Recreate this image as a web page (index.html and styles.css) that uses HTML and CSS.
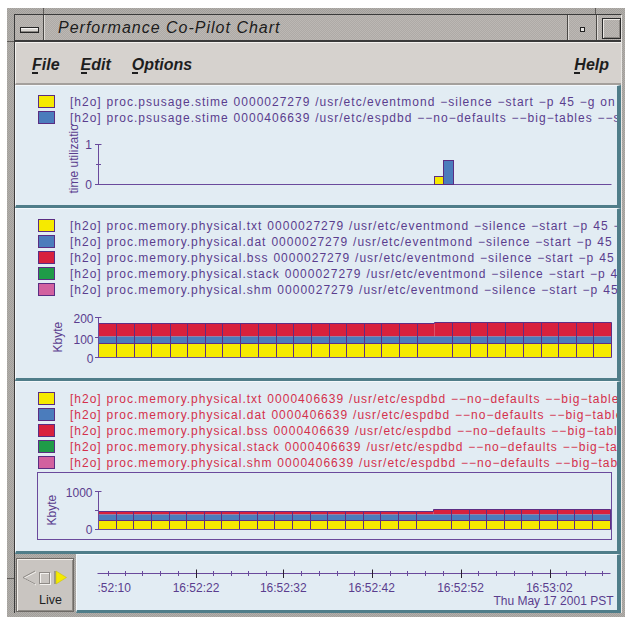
FILE: index.html
```html
<!DOCTYPE html>
<html lang="en">
<head>
<meta charset="utf-8">
<title>Performance Co-Pilot Chart</title>
<link rel="stylesheet" href="styles.css">
</head>
<body>
<div class="frame">
  <div class="window">
    <header class="titlebar">
      <div class="tb-button tb-menu"><span class="tb-menu-bar"></span></div>
      <div class="tb-title">Performance Co-Pilot Chart</div>
      <div class="tb-button tb-min"><span class="tb-min-dot"></span></div>
      <div class="tb-button tb-max"><span class="tb-max-box"></span></div>
    </header>

    <nav class="menubar">
      <span class="menu-item"><span class="mn">F</span>ile</span>
      <span class="menu-item"><span class="mn">E</span>dit</span>
      <span class="menu-item"><span class="mn">O</span>ptions</span>
      <span class="menu-item help"><span class="mn">H</span>elp</span>
    </nav>

    <main class="charts">
      <!-- system time per process -->
      <section class="panel">
        <ul class="legend">
          <li class="legend-row"><span class="swatch c-yellow"></span><span class="legend-text">[h2o] proc.psusage.stime 0000027279 /usr/etc/eventmond −silence −start −p 45 −g on</span></li>
          <li class="legend-row"><span class="swatch c-blue"></span><span class="legend-text">[h2o] proc.psusage.stime 0000406639 /usr/etc/espdbd −−no−defaults −−big−tables −−skip−locking</span></li>
        </ul>
        <svg class="plot" width="601" height="80" viewBox="16 125 601 80">
          <text class="ylabel" transform="translate(78 193.5) rotate(-90)">time utilization</text>
          <text class="tick-label" x="92" y="149.3">1</text>
          <text class="tick-label" x="92" y="188.6">0</text>
          <path class="axis" d="M98.5 144.5V184.5M95 144.5H101.5M96 164.5H101M95 184.5H611.5"/>
          <rect class="bar c-yellow" x="434.5" y="176.5" width="9" height="8"/>
          <rect class="bar c-blue" x="443.5" y="160.5" width="10" height="24"/>
        </svg>
      </section>

      <!-- memory of eventmond -->
      <section class="panel">
        <ul class="legend">
          <li class="legend-row"><span class="swatch c-yellow"></span><span class="legend-text">[h2o] proc.memory.physical.txt 0000027279 /usr/etc/eventmond −silence −start −p 45 −g on</span></li>
          <li class="legend-row"><span class="swatch c-blue"></span><span class="legend-text">[h2o] proc.memory.physical.dat 0000027279 /usr/etc/eventmond −silence −start −p 45 −g on</span></li>
          <li class="legend-row"><span class="swatch c-red"></span><span class="legend-text">[h2o] proc.memory.physical.bss 0000027279 /usr/etc/eventmond −silence −start −p 45 −g on</span></li>
          <li class="legend-row"><span class="swatch c-green"></span><span class="legend-text">[h2o] proc.memory.physical.stack 0000027279 /usr/etc/eventmond −silence −start −p 45 −g on</span></li>
          <li class="legend-row"><span class="swatch c-pink"></span><span class="legend-text">[h2o] proc.memory.physical.shm 0000027279 /usr/etc/eventmond −silence −start −p 45 −g on</span></li>
        </ul>
        <svg class="plot" width="601" height="81" viewBox="16 297 601 81">
          <text class="ylabel" transform="translate(62 352.5) rotate(-90)">Kbyte</text>
          <text class="tick-label" x="93.5" y="322.6">200</text>
          <text class="tick-label" x="93.5" y="343.6">100</text>
          <text class="tick-label" x="93.5" y="362.6">0</text>
          <rect class="band c-red" x="98.5" y="323.5" width="336" height="13"/>
          <rect class="band c-red" x="434.5" y="322.5" width="177" height="14"/>
          <rect class="band c-blue" x="98.5" y="336.5" width="513" height="7"/>
          <rect class="band c-yellow" x="98.5" y="343.5" width="513" height="14"/>
          <path class="bar-line" d="M98.5 323.5H434.5V322.5H611.5V357.5M98.5 343.5H611.5
            M116.5 323.5V357.5M134.5 323.5V357.5M151.5 323.5V357.5M170.5 323.5V357.5M187.5 323.5V357.5
            M205.5 323.5V357.5M222.5 323.5V357.5M240.5 323.5V357.5M258.5 323.5V357.5M276.5 323.5V357.5
            M293.5 323.5V357.5M311.5 323.5V357.5M329.5 323.5V357.5M346.5 323.5V357.5M364.5 323.5V357.5
            M381.5 323.5V357.5M399.5 323.5V357.5M417.5 323.5V357.5
            M452.5 322.5V357.5M470.5 322.5V357.5M487.5 322.5V357.5M505.5 322.5V357.5M523.5 322.5V357.5
            M541.5 322.5V357.5M558.5 322.5V357.5M576.5 322.5V357.5M593.5 322.5V357.5"/>
          <path class="axis" d="M98.5 317V357.5M95 317.5H101.5M95 337.5H98.5M95 357.5H611.5"/>
        </svg>
      </section>

      <!-- memory of espdbd -->
      <section class="panel panel-alt">
        <ul class="legend">
          <li class="legend-row"><span class="swatch c-yellow"></span><span class="legend-text">[h2o] proc.memory.physical.txt 0000406639 /usr/etc/espdbd −−no−defaults −−big−tables −−skip−locking</span></li>
          <li class="legend-row"><span class="swatch c-blue"></span><span class="legend-text">[h2o] proc.memory.physical.dat 0000406639 /usr/etc/espdbd −−no−defaults −−big−tables −−skip−locking</span></li>
          <li class="legend-row"><span class="swatch c-red"></span><span class="legend-text">[h2o] proc.memory.physical.bss 0000406639 /usr/etc/espdbd −−no−defaults −−big−tables −−skip−locking</span></li>
          <li class="legend-row"><span class="swatch c-green"></span><span class="legend-text">[h2o] proc.memory.physical.stack 0000406639 /usr/etc/espdbd −−no−defaults −−big−tables −−skip−locking</span></li>
          <li class="legend-row"><span class="swatch c-pink"></span><span class="legend-text">[h2o] proc.memory.physical.shm 0000406639 /usr/etc/espdbd −−no−defaults −−big−tables −−skip−locking</span></li>
        </ul>
        <svg class="plot" width="601" height="81" viewBox="16 470 601 81">
          <rect class="plot-frame" x="37.5" y="472.5" width="574" height="67"/>
          <text class="ylabel" transform="translate(55.5 525.5) rotate(-90)">Kbyte</text>
          <text class="tick-label" x="92.5" y="496.6">1000</text>
          <text class="tick-label" x="92.5" y="534.3">0</text>
          <rect class="band c-red" x="98.5" y="511.5" width="335" height="3"/>
          <rect class="band c-red" x="433.5" y="509.5" width="177" height="5"/>
          <rect class="band c-blue" x="98.5" y="514.5" width="512" height="6"/>
          <rect class="band c-yellow" x="98.5" y="520.5" width="512" height="9"/>
          <path class="bar-line" d="M98.5 511.5H433.5V509.5H610.5V529.5M98.5 520.5H610.5
            M116.5 511.5V529.5M133.5 511.5V529.5M151.5 511.5V529.5M169.5 511.5V529.5M186.5 511.5V529.5
            M204.5 511.5V529.5M221.5 511.5V529.5M239.5 511.5V529.5M257.5 511.5V529.5M274.5 511.5V529.5
            M292.5 511.5V529.5M310.5 511.5V529.5M327.5 511.5V529.5M345.5 511.5V529.5M363.5 511.5V529.5
            M380.5 511.5V529.5M398.5 511.5V529.5M416.5 511.5V529.5
            M451.5 509.5V529.5M469.5 509.5V529.5M486.5 509.5V529.5M504.5 509.5V529.5M521.5 509.5V529.5
            M539.5 509.5V529.5M557.5 509.5V529.5M574.5 509.5V529.5M592.5 509.5V529.5"/>
          <path class="axis" d="M98.5 491.5V529.5M95 491.5H101.5M95 510.5H98.5M95 529.5H610.5"/>
        </svg>
      </section>

      <!-- time controls -->
      <div class="timebar">
        <div class="live">
          <svg class="live-icons" width="56" height="28" viewBox="17 559 56 28">
            <polyline class="emboss-hi" points="36,572 24,578 36,585"/>
            <polyline class="emboss-lo" points="35,571 23,577.5 35,584"/>
            <rect class="emboss-hi" x="40.5" y="573.5" width="10" height="11"/>
            <rect class="emboss-lo" x="39.5" y="572.5" width="10" height="11"/>
            <rect class="play-edge" x="54" y="571" width="2" height="13"/>
            <polygon class="play" points="56,571 66.5,577.5 56,584"/>
          </svg>
          <span class="live-label">Live</span>
        </div>
        <div class="time-panel">
          <svg class="time-axis" width="540" height="55" viewBox="77 555 540 55">
            <path class="tick-minor" d="M97.5 573.5H610.5
              M108.5 571V576M125.5 571V576M142.5 571V576M160.5 571V576M178.5 571V576
              M213.5 571V576M231.5 571V576M248.5 571V576M266.5 571V576
              M301.5 571V576M319.5 571V576M337.5 571V576M354.5 571V576
              M390.5 571V576M407.5 571V576M425.5 571V576M443.5 571V576
              M478.5 571V576M496.5 571V576M514.5 571V576M532.5 571V576
              M566.5 571V576M585.5 571V576M602.5 571V576"/>
            <path class="tick-major" d="M196.5 569.5V578M283.5 569.5V578M372.5 569.5V578M461.5 569.5V578M550.5 569.5V578"/>
            <text class="time-label start" x="97.5" y="591.6">:52:10</text>
            <text class="time-label" x="196" y="591.6">16:52:22</text>
            <text class="time-label" x="283.3" y="591.6">16:52:32</text>
            <text class="time-label" x="371.5" y="591.6">16:52:42</text>
            <text class="time-label" x="460.5" y="591.6">16:52:52</text>
            <text class="time-label" x="549.3" y="591.6">16:53:02</text>
            <text class="date-label" x="613.5" y="605.3">Thu May 17 2001 PST</text>
          </svg>
        </div>
      </div>
    </main>
  </div>
</div>
</body>
</html>
```

FILE: styles.css
```css
* {
  box-sizing: border-box;
}

html,
body {
  margin: 0;
  padding: 0;
}

body {
  width: 625px;
  height: 617px;
  overflow: hidden;
  background: #ffffff;
  font-family: "Liberation Sans", Arial, sans-serif;
}

/* ---- window manager frame ---- */
.frame {
  position: relative;
  margin: 8px 0 0 7px;
  width: 618px;
  height: 609px;
  padding: 6px 0 0 7px;
  background-color: #a9a6a2;
  background-image: repeating-conic-gradient(#a29f9b 0 25%, #b2afab 0 50%);
  background-size: 2px 2px;
}

/* resize-corner notches cut into the frame border */
.frame::before {
  content: "";
  position: absolute;
  left: 36px;
  top: 0;
  width: 1px;
  height: 6px;
  background: #5e5b58;
  box-shadow: 552px 0 0 #5e5b58;
}

.frame::after {
  content: "";
  position: absolute;
  left: 0;
  top: 33px;
  width: 7px;
  height: 1px;
  background: #5e5b58;
  box-shadow: 0 537px 0 #5e5b58;
}

.window {
  width: 608px;
  border: 1px solid #3a3a3a;
  border-bottom: none;
  border-right-color: #e9e7e4;
}

.titlebar {
  display: flex;
  height: 27px;
  border-bottom: 2px solid #3a3a3a;
  background-color: #b5b1ad;
  background-image: repeating-conic-gradient(#aeaaa6 0 25%, #bcb8b4 0 50%);
  background-size: 2px 2px;
}

.tb-button {
  flex: none;
  display: flex;
  justify-content: center;
  align-items: flex-start;
}

.tb-menu {
  width: 29px;
  border-right: 1px solid #4a4845;
}

.tb-menu-bar {
  width: 19px;
  height: 6px;
  margin-top: 12px;
  border: 1px solid #262626;
  background: #d9d6d2;
  box-shadow: inset 0 1px 0 #f6f4f2, inset 0 -1px 0 #8b8884;
}

.tb-title {
  flex: 1;
  border-left: 1px solid #dedbd7;
  padding: 1px 0 0 13px;
  font-size: 16px;
  font-style: italic;
  letter-spacing: 1px;
  line-height: 24px;
  color: #1c1c1c;
  white-space: nowrap;
}

.tb-min {
  width: 29px;
  border-left: 1px solid #4a4845;
  box-shadow: inset 1px 0 0 #dedbd7;
}

.tb-min-dot {
  width: 5px;
  height: 5px;
  margin-top: 12px;
  border: 1px solid #222;
  background: #e8e6e3;
}

.tb-max {
  width: 25px;
  border-left: 1px solid #4a4845;
  box-shadow: inset 1px 0 0 #dedbd7;
  justify-content: flex-end;
}

.tb-max-box {
  width: 19px;
  height: 21px;
  margin-top: 3px;
  border: 1px solid #2a2a2a;
  box-shadow: inset 1px 1px 0 #ebe8e4, inset -1px -1px 0 #8a8682;
}

/* ---- menu bar ---- */
.menubar {
  display: flex;
  gap: 21px;
  height: 43px;
  padding: 13px 12px 0 16px;
  background: #d6d2ce;
  border-top: 1px solid #f3f1ee;
  border-left: 1px solid #f3f1ee;
  border-bottom: 2px solid #a4a09c;
}

.menu-item {
  font-size: 16px;
  font-style: italic;
  font-weight: bold;
  line-height: 18px;
  color: #1e1e1e;
}

.menu-item.help {
  margin-left: auto;
}

.mn {
  position: relative;
}

.mn::after {
  content: "";
  position: absolute;
  left: 0;
  bottom: -1px;
  width: 6px;
  height: 2px;
  background: #1e1e1e;
}

/* ---- chart strips ---- */
.charts {
  display: flex;
  flex-direction: column;
}

.panel {
  overflow: hidden;
  background: #e2ecf3;
  border-top: 1px solid #f4f8fb;
  border-left: 1px solid #f4f8fb;
  border-right: 4px solid #4f7d89;
  border-bottom: 3px solid #4f7d89;
}

.legend {
  list-style: none;
  margin: 0;
  padding: 8px 0 0 22px;
}

.panel:first-child .legend {
  padding-top: 7px;
}

.legend-row {
  display: flex;
  height: 16px;
  white-space: nowrap;
}

.swatch {
  flex: none;
  width: 17px;
  height: 13px;
  margin-top: 2px;
  border: 1px solid #5a2d82;
}

.legend-text {
  margin-left: 15px;
  padding-top: 3px;
  font-size: 12px;
  line-height: 13px;
  letter-spacing: 1px;
  word-spacing: 0.6px;
  color: #5a3d8e;
}

.panel-alt .legend-text {
  color: #d4304c;
}

.plot,
.time-axis,
.live-icons {
  display: block;
}

.c-yellow { background: #f6ea00; fill: #f6ea00; }
.c-blue   { background: #4b7cbc; fill: #4b7cbc; }
.c-red    { background: #d8213d; fill: #d8213d; }
.c-green  { background: #1f9b48; fill: #1f9b48; }
.c-pink   { background: #d2619f; fill: #d2619f; }

.plot text,
.time-axis text {
  font-family: "Liberation Sans", Arial, sans-serif;
  font-size: 12px;
  fill: #5a3d8e;
}

.tick-label {
  text-anchor: end;
}

.axis {
  fill: none;
  stroke: #6a4a9c;
  stroke-width: 1;
}

.bar {
  stroke: #5a2d82;
  stroke-width: 1;
}

.bar-line {
  fill: none;
  stroke: #5e2e84;
  stroke-width: 1;
}

.plot-frame {
  fill: none;
  stroke: #6a4a9c;
  stroke-width: 1;
}

/* ---- time controls ---- */
.timebar {
  display: flex;
  gap: 2px;
  height: 59px;
}

.live {
  flex: none;
  width: 58px;
  height: 54px;
  margin: 4px 0 0 1px;
  border: 1px solid #6e6a66;
  background: #c9c5c1;
  box-shadow: inset 1px 1px 0 #f2efeb, inset -1px -1px 0 #8f8b86;
}

.live-label {
  display: block;
  margin-top: 6px;
  padding-left: 22px;
  font-size: 12.5px;
  line-height: 14px;
  color: #1e1e1e;
}

.emboss-hi {
  fill: none;
  stroke: #f4f2ef;
  stroke-width: 1;
}

.emboss-lo {
  fill: none;
  stroke: #8e8a86;
  stroke-width: 1;
}

.play-edge {
  fill: #9a9692;
}

.play {
  fill: #f4ea00;
  stroke: #c9bf10;
  stroke-width: 0.6;
}

.time-panel {
  flex: 1;
  background: #e2ecf3;
  border-top: 1px solid #f4f8fb;
  border-left: 1px solid #f4f8fb;
  border-right: 4px solid #4f7d89;
  border-bottom: 3px solid #4f7d89;
}

.tick-minor {
  fill: none;
  stroke: #6a4a9c;
  stroke-width: 1;
}

.tick-major {
  fill: none;
  stroke: #2a2030;
  stroke-width: 1;
}

.time-label {
  text-anchor: middle;
}

.time-label.start {
  text-anchor: start;
}

.date-label {
  text-anchor: end;
}
```
